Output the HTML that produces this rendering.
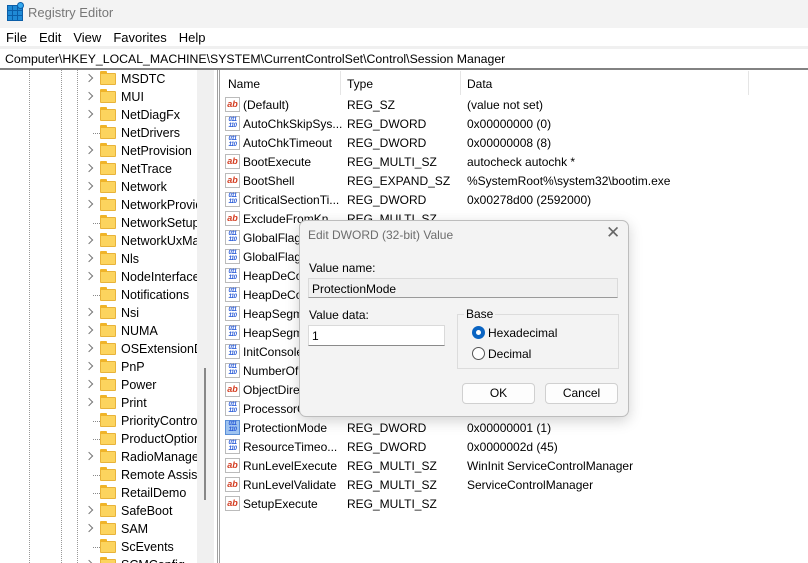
<!DOCTYPE html>
<html><head><meta charset="utf-8"><style>
*{margin:0;padding:0;box-sizing:border-box}
body{width:808px;height:563px;overflow:hidden;background:#fff;font-family:"Liberation Sans",sans-serif;font-size:12px;color:#000;position:relative}
.a{position:absolute;white-space:nowrap}
.title{left:0;top:0;width:808px;height:28px;background:#f3f3f3}
.menu span{margin-right:12px}
.tree{left:0;top:70px;width:197px;height:493px;overflow:hidden}
.trow{position:absolute;left:0;height:18px;width:197px}
.chev{position:absolute;left:86px;top:5px;width:6px;height:6px;border-right:1.5px solid #777;border-top:1.5px solid #777;transform:rotate(45deg)}
.dot{position:absolute;left:93px;top:9px;width:7px;border-top:1px dotted #888}
.fold{position:absolute;left:100px;top:3px;width:16px;height:12px;background:#fcd45e;border:1px solid #e8b33a;border-radius:1px}
.fold:before{content:"";position:absolute;left:-1px;top:-3px;width:7px;height:3px;background:#f0b429;border-radius:1px 1px 0 0}
.tl{position:absolute;left:121px;top:2px;font-size:12.5px}
.vl{position:absolute;top:70px;height:493px;border-left:1px dotted #999}
.lrow{position:absolute;left:221px;height:19px;width:587px}
.lrow .n{position:absolute;left:22px;top:3px;width:100px;overflow:hidden}
.lrow .t{position:absolute;left:126px;top:3px}
.lrow .d{position:absolute;left:246px;top:3px}
.ic{position:absolute;left:4px;top:2px;width:15px;height:15px;border:1px solid #bbb;background:#fff;font-size:9px;font-weight:bold;line-height:12px;text-align:center}
.ab{color:#d33b1f}
.dw{color:#2a5bd7;font-size:6px;line-height:6px;letter-spacing:-0.5px}
.sel{background:#9ec3f0;border-color:#5a8ed6}
.btn{position:absolute;height:21px;border:1px solid #d0d0d0;border-radius:4px;background:#fdfdfd;text-align:center;line-height:19px}
</style></head><body>
<div class="a title"></div>
<div class="a" style="left:7px;top:5px;width:16px;height:16px;background:#1f8ad6;border:1px solid #0b5ea8"></div>
<div class="a" style="left:7px;top:5px;width:16px;height:16px;background:linear-gradient(#0b5ea8 0 0) 5px 0/1px 16px no-repeat,linear-gradient(#0b5ea8 0 0) 10px 0/1px 16px no-repeat,linear-gradient(#0b5ea8 0 0) 0 5px/16px 1px no-repeat,linear-gradient(#0b5ea8 0 0) 0 10px/16px 1px no-repeat"></div>
<div class="a" style="left:17px;top:2px;width:7px;height:7px;background:#35a9ef;border:1px solid #0b5ea8;border-radius:50%"></div>
<div class="a" style="left:28px;top:5px;color:#777;font-size:13px">Registry Editor</div>
<div class="a menu" style="left:6px;top:30px;font-size:13px"><span>File</span><span>Edit</span><span>View</span><span>Favorites</span><span>Help</span></div>
<div class="a" style="left:0;top:46px;width:808px;height:3px;background:#f0f0f0"></div>
<div class="a" style="left:5px;top:52px;font-size:12.3px">Computer\HKEY_LOCAL_MACHINE\SYSTEM\CurrentControlSet\Control\Session Manager</div>
<div class="a" style="left:0;top:68px;width:808px;height:2px;background:#828282"></div>

<div class="vl" style="left:29px"></div><div class="vl" style="left:61px"></div><div class="vl" style="left:77px"></div>
<div class="a tree">
<div class="trow" style="top:0"><i class="chev"></i><i class="fold"></i><span class="tl">MSDTC</span></div>
<div class="trow" style="top:18px"><i class="chev"></i><i class="fold"></i><span class="tl">MUI</span></div>
<div class="trow" style="top:36px"><i class="chev"></i><i class="fold"></i><span class="tl">NetDiagFx</span></div>
<div class="trow" style="top:54px"><i class="dot"></i><i class="fold"></i><span class="tl">NetDrivers</span></div>
<div class="trow" style="top:72px"><i class="chev"></i><i class="fold"></i><span class="tl">NetProvision</span></div>
<div class="trow" style="top:90px"><i class="chev"></i><i class="fold"></i><span class="tl">NetTrace</span></div>
<div class="trow" style="top:108px"><i class="chev"></i><i class="fold"></i><span class="tl">Network</span></div>
<div class="trow" style="top:126px"><i class="chev"></i><i class="fold"></i><span class="tl">NetworkProvider</span></div>
<div class="trow" style="top:144px"><i class="dot"></i><i class="fold"></i><span class="tl">NetworkSetup2</span></div>
<div class="trow" style="top:162px"><i class="chev"></i><i class="fold"></i><span class="tl">NetworkUxManager</span></div>
<div class="trow" style="top:180px"><i class="chev"></i><i class="fold"></i><span class="tl">Nls</span></div>
<div class="trow" style="top:198px"><i class="chev"></i><i class="fold"></i><span class="tl">NodeInterfaces</span></div>
<div class="trow" style="top:216px"><i class="dot"></i><i class="fold"></i><span class="tl">Notifications</span></div>
<div class="trow" style="top:234px"><i class="chev"></i><i class="fold"></i><span class="tl">Nsi</span></div>
<div class="trow" style="top:252px"><i class="chev"></i><i class="fold"></i><span class="tl">NUMA</span></div>
<div class="trow" style="top:270px"><i class="chev"></i><i class="fold"></i><span class="tl">OSExtensionDatabase</span></div>
<div class="trow" style="top:288px"><i class="chev"></i><i class="fold"></i><span class="tl">PnP</span></div>
<div class="trow" style="top:306px"><i class="chev"></i><i class="fold"></i><span class="tl">Power</span></div>
<div class="trow" style="top:324px"><i class="chev"></i><i class="fold"></i><span class="tl">Print</span></div>
<div class="trow" style="top:342px"><i class="dot"></i><i class="fold"></i><span class="tl">PriorityControl</span></div>
<div class="trow" style="top:360px"><i class="dot"></i><i class="fold"></i><span class="tl">ProductOptions</span></div>
<div class="trow" style="top:378px"><i class="chev"></i><i class="fold"></i><span class="tl">RadioManagement</span></div>
<div class="trow" style="top:396px"><i class="dot"></i><i class="fold"></i><span class="tl">Remote Assistance</span></div>
<div class="trow" style="top:414px"><i class="dot"></i><i class="fold"></i><span class="tl">RetailDemo</span></div>
<div class="trow" style="top:432px"><i class="chev"></i><i class="fold"></i><span class="tl">SafeBoot</span></div>
<div class="trow" style="top:450px"><i class="chev"></i><i class="fold"></i><span class="tl">SAM</span></div>
<div class="trow" style="top:468px"><i class="dot"></i><i class="fold"></i><span class="tl">ScEvents</span></div>
<div class="trow" style="top:486px"><i class="chev"></i><i class="fold"></i><span class="tl">SCMConfig</span></div>
</div>
<div class="a" style="left:197px;top:70px;width:17px;height:493px;background:#f0f0f0"></div>
<div class="a" style="left:204px;top:368px;width:2px;height:132px;background:#888"></div>
<div class="a" style="left:217px;top:70px;width:1px;height:493px;background:#a0a0a0"></div>
<div class="a" style="left:219px;top:70px;width:1px;height:493px;background:#a0a0a0"></div>

<div class="a" style="left:228px;top:77px">Name</div>
<div class="a" style="left:347px;top:77px">Type</div>
<div class="a" style="left:467px;top:77px">Data</div>
<div class="a" style="left:340px;top:71px;width:1px;height:24px;background:#e5e5e5"></div>
<div class="a" style="left:460px;top:71px;width:1px;height:24px;background:#e5e5e5"></div>
<div class="a" style="left:748px;top:71px;width:1px;height:24px;background:#e5e5e5"></div>

<div class="lrow" style="top:95px"><i class="ic ab">ab</i><span class="n">(Default)</span><span class="t">REG_SZ</span><span class="d">(value not set)</span></div>
<div class="lrow" style="top:114px"><i class="ic dw">011<br>110</i><span class="n">AutoChkSkipSys...</span><span class="t">REG_DWORD</span><span class="d">0x00000000 (0)</span></div>
<div class="lrow" style="top:133px"><i class="ic dw">011<br>110</i><span class="n">AutoChkTimeout</span><span class="t">REG_DWORD</span><span class="d">0x00000008 (8)</span></div>
<div class="lrow" style="top:152px"><i class="ic ab">ab</i><span class="n">BootExecute</span><span class="t">REG_MULTI_SZ</span><span class="d">autocheck autochk *</span></div>
<div class="lrow" style="top:171px"><i class="ic ab">ab</i><span class="n">BootShell</span><span class="t">REG_EXPAND_SZ</span><span class="d">%SystemRoot%\system32\bootim.exe</span></div>
<div class="lrow" style="top:190px"><i class="ic dw">011<br>110</i><span class="n">CriticalSectionTi...</span><span class="t">REG_DWORD</span><span class="d">0x00278d00 (2592000)</span></div>
<div class="lrow" style="top:209px"><i class="ic ab">ab</i><span class="n">ExcludeFromKn...</span><span class="t">REG_MULTI_SZ</span></div>
<div class="lrow" style="top:228px"><i class="ic dw">011<br>110</i><span class="n">GlobalFlag</span></div>
<div class="lrow" style="top:247px"><i class="ic dw">011<br>110</i><span class="n">GlobalFlag2</span></div>
<div class="lrow" style="top:266px"><i class="ic dw">011<br>110</i><span class="n">HeapDeCommit</span></div>
<div class="lrow" style="top:285px"><i class="ic dw">011<br>110</i><span class="n">HeapDeCommit</span></div>
<div class="lrow" style="top:304px"><i class="ic dw">011<br>110</i><span class="n">HeapSegment</span></div>
<div class="lrow" style="top:323px"><i class="ic dw">011<br>110</i><span class="n">HeapSegment</span></div>
<div class="lrow" style="top:342px"><i class="ic dw">011<br>110</i><span class="n">InitConsole</span></div>
<div class="lrow" style="top:361px"><i class="ic dw">011<br>110</i><span class="n">NumberOfInit</span></div>
<div class="lrow" style="top:380px"><i class="ic ab">ab</i><span class="n">ObjectDirect</span></div>
<div class="lrow" style="top:399px"><i class="ic dw">011<br>110</i><span class="n">ProcessorControl</span></div>
<div class="lrow" style="top:418px"><i class="ic dw sel">011<br>110</i><span class="n">ProtectionMode</span><span class="t">REG_DWORD</span><span class="d">0x00000001 (1)</span></div>
<div class="lrow" style="top:437px"><i class="ic dw">011<br>110</i><span class="n">ResourceTimeo...</span><span class="t">REG_DWORD</span><span class="d">0x0000002d (45)</span></div>
<div class="lrow" style="top:456px"><i class="ic ab">ab</i><span class="n">RunLevelExecute</span><span class="t">REG_MULTI_SZ</span><span class="d">WinInit ServiceControlManager</span></div>
<div class="lrow" style="top:475px"><i class="ic ab">ab</i><span class="n">RunLevelValidate</span><span class="t">REG_MULTI_SZ</span><span class="d">ServiceControlManager</span></div>
<div class="lrow" style="top:494px"><i class="ic ab">ab</i><span class="n">SetupExecute</span><span class="t">REG_MULTI_SZ</span></div>

<div class="a" style="left:299px;top:220px;width:330px;height:197px;background:#f3f3f3;border:1px solid #bdbdbd;border-radius:7px;box-shadow:0 4px 14px rgba(0,0,0,.18)"></div>
<div class="a" style="left:308px;top:228px;color:#6d6d6d">Edit DWORD (32-bit) Value</div>
<div class="a" style="left:606px;top:223px;font-size:17px;color:#666">✕</div>
<div class="a" style="left:309px;top:261px">Value name:</div>
<div class="a" style="left:308px;top:278px;width:310px;height:20px;background:#f0f0f0;border:1px solid #dadada;border-bottom-color:#9a9a9a;padding:3px 3px;font-size:12px">ProtectionMode</div>
<div class="a" style="left:309px;top:308px">Value data:</div>
<div class="a" style="left:308px;top:325px;width:137px;height:21px;background:#fff;border:1px solid #dadada;border-bottom-color:#8a8a8a;padding:3px 3px">1</div>
<div class="a" style="left:457px;top:314px;width:162px;height:55px;border:1px solid #dcdcdc"></div>
<div class="a" style="left:464px;top:307px;background:#f3f3f3;padding:0 2px">Base</div>
<div class="a" style="left:472px;top:326px;width:13px;height:13px;border-radius:50%;background:#0a64c2"></div>
<div class="a" style="left:476px;top:330px;width:5px;height:5px;border-radius:50%;background:#fff"></div>
<div class="a" style="left:488px;top:326px">Hexadecimal</div>
<div class="a" style="left:472px;top:347px;width:13px;height:13px;border-radius:50%;border:1px solid #555;background:#fff"></div>
<div class="a" style="left:488px;top:347px">Decimal</div>
<div class="btn" style="left:462px;top:383px;width:73px">OK</div>
<div class="btn" style="left:545px;top:383px;width:73px">Cancel</div>
</body></html>
